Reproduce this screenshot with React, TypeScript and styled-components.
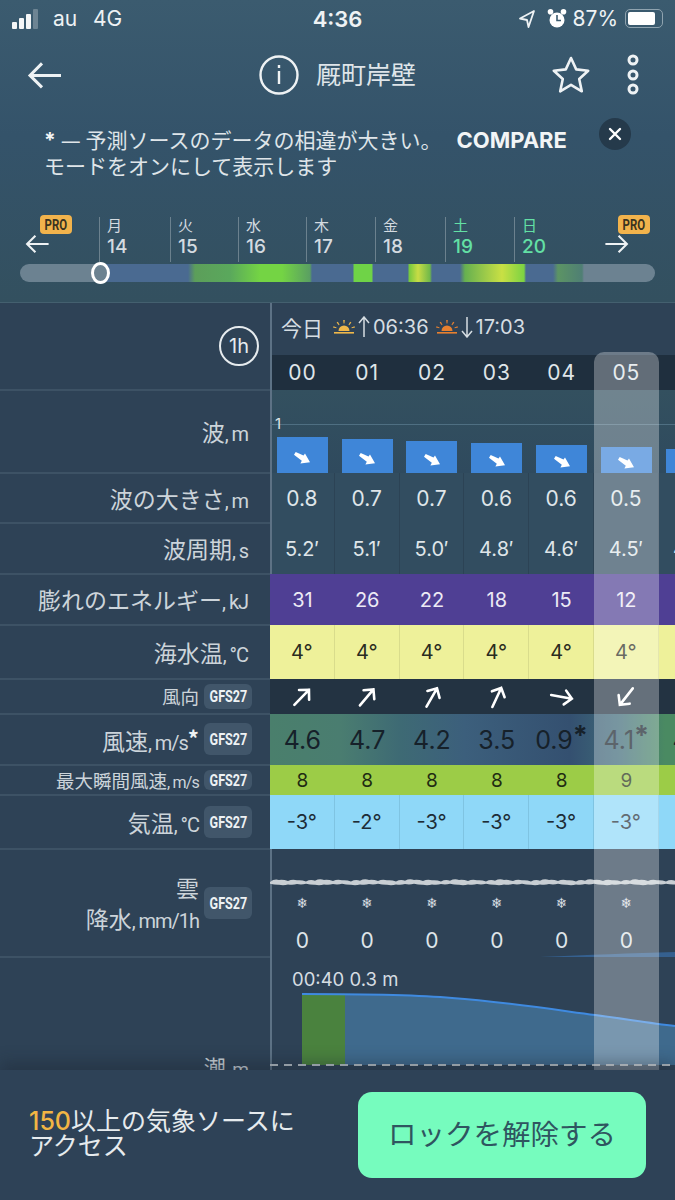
import React from "react";
import styled, { createGlobalStyle } from "styled-components";

const GlobalStyle = createGlobalStyle`
  html, body { margin: 0; padding: 0; background: #2e4256; }
  body { font-family: Inter, "Noto Sans CJK JP", sans-serif; }
`;

const CELL = 64.8;

const Page = styled.div`
  width: 675px;
  height: 1200px;
  overflow: hidden;
  display: flex;
  flex-direction: column;
  color: #e4e9ec;
`;

const Head = styled.header`
  height: 303px;
  flex: none;
  background: linear-gradient(180deg, #3b5b6f 0%, #34536a 45%, #33505f 100%);
  border-bottom: 1px solid #44606f;
  box-sizing: border-box;
`;

const StatusBar = styled.div`
  height: 37px;
  display: flex;
  align-items: center;
  padding: 0 12px;
  font-size: 21px;
  color: #eef2f4;
`;

const Signal = styled.div`
  display: flex;
  align-items: flex-end;
  gap: 2px;
  height: 20px;
  margin-right: 15px;
`;

const SignalBar = styled.i<{ $h: number; $off?: boolean }>`
  display: block;
  width: 5px;
  height: ${(p) => p.$h}px;
  border-radius: 1px;
  background: ${(p) => (p.$off ? "#6d8493" : "#f4f6f7")};
`;

const Carrier = styled.span`
  width: 40px;
`;

const Clock = styled.span`
  position: absolute;
  left: 0;
  width: 675px;
  text-align: center;
  font-weight: 600;
  font-size: 22px;
`;

const StatusRight = styled.div`
  margin-left: auto;
  display: flex;
  align-items: center;
  gap: 6px;
`;

const LocationIcon = styled.svg`
  margin-right: 5px;
`;

const Battery = styled.div`
  width: 38px;
  height: 19px;
  border: 1.5px solid #8fa3af;
  border-radius: 5px;
  padding: 2px;
  box-sizing: border-box;
  margin-left: 1px;
  &::before {
    content: "";
    display: block;
    width: 85%;
    height: 100%;
    background: #fff;
    border-radius: 2px;
  }
`;

const Nav = styled.nav`
  height: 76px;
  display: flex;
  align-items: center;
  padding-left: 27px;
`;

const Title = styled.div`
  display: flex;
  align-items: center;
  gap: 17px;
  margin-left: 196px;
  width: 292px;
  font-size: 25px;
  color: #dfe5e9;
`;

const TitleText = styled.span`
  margin-bottom: 4px;
`;

const NavActions = styled.div`
  display: flex;
  align-items: center;
  gap: 35px;
`;

const Notice = styled.div`
  display: flex;
  align-items: flex-start;
  height: 54px;
  margin-top: 15px;
  padding-left: 44px;
`;

const NoticeText = styled.p`
  margin: 0;
  width: 555px;
  flex: none;
  font-size: 21px;
  line-height: 25px;
  white-space: nowrap;
  color: #dfe5e9;
`;

const Strong = styled.b`
  font-weight: 700;
  color: #f2f5f6;
`;

const NoticeDash = styled.span`
  font-size: 18px;
`;

const CompareWord = styled(Strong)`
  margin-left: 15px;
  font-size: 22px;
`;

const CloseButton = styled.div`
  width: 32px;
  height: 32px;
  margin-top: -10px;
  border-radius: 50%;
  background: #253a4b;
  display: flex;
  align-items: center;
  justify-content: center;
`;

const DayRow = styled.div`
  display: flex;
  height: 45px;
  margin-top: 35px;
`;

const ArrowBox = styled.div<{ $w: number; $pad: number }>`
  position: relative;
  width: ${(p) => p.$w}px;
  flex: none;
  box-sizing: border-box;
  padding: 17px 0 0 ${(p) => p.$pad}px;
`;

const ProBadge = styled.span<{ $left: number }>`
  position: absolute;
  top: -2px;
  left: ${(p) => p.$left}px;
  width: 32px;
  height: 19px;
  border-radius: 4px;
  background: #f2b34c;
  display: flex;
  align-items: center;
  justify-content: center;
`;

const ProText = styled.span`
  display: block;
  color: #3a3320;
  font-family: "Roboto", sans-serif;
  font-size: 15px;
  font-weight: 700;
  transform: scaleX(0.76);
`;

const Day = styled.div<{ $w: number; $weekend?: boolean }>`
  width: ${(p) => p.$w}px;
  flex: none;
  box-sizing: border-box;
  border-left: 1px solid rgba(255, 255, 255, 0.28);
  padding-left: 7px;
  color: ${(p) => (p.$weekend ? "#63e0a5" : "#d4dbe0")};
`;

const DayName = styled.div`
  font-size: 15px;
  line-height: 18px;
`;

const DayNum = styled.div`
  font-size: 19px;
  line-height: 24px;
  font-weight: 500;
`;

const Slider = styled.div`
  position: relative;
  height: 18px;
  margin: 2px 20px 0;
  border-radius: 9px;
  background: linear-gradient(
    90deg,
    #6c8291 0 80px,
    #4a6a91 80px 168px,
    #5c9e5a 175px,
    #5aa85c 210px,
    #74d444 240px,
    #74d444 262px,
    #5a9f62 290px,
    #4a6a91 292px 333px,
    #6fd347 334px 352px,
    #4a6a91 353px 388px,
    #74c83f 389px,
    #c8dc45 398px,
    #6fb84a 410px,
    #4a6a91 412px 440px,
    #66b050 445px,
    #c9e044 482px,
    #7cd342 504px,
    #4a6a91 506px 533px,
    #5c9464 538px,
    #4f7f74 562px,
    #6c8291 564px
  );
`;

const Thumb = styled.div`
  position: absolute;
  left: 71px;
  top: -2px;
  width: 19px;
  height: 22px;
  box-sizing: border-box;
  border: 3px solid #fff;
  border-radius: 50%;
  background: #6c8291;
`;

const Table = styled.section`
  position: relative;
  height: 767px;
  flex: none;
  overflow: hidden;
  background: #2e4256;
`;

const Highlight = styled.div`
  position: absolute;
  left: 594px;
  top: 49px;
  bottom: 0;
  width: 65px;
  border-radius: 10px 10px 0 0;
  background: rgba(255, 255, 255, 0.3);
  pointer-events: none;
`;

const Row = styled.div<{ $h: number }>`
  display: flex;
  height: ${(p) => p.$h}px;
`;

const Label = styled.div<{ $badge?: boolean; $size?: number }>`
  width: 270px;
  flex: none;
  box-sizing: border-box;
  display: flex;
  align-items: center;
  justify-content: flex-end;
  gap: 5px;
  padding-right: ${(p) => (p.$badge ? 18 : 22)}px;
  border-bottom: 1px solid #3d5265;
  box-shadow: 0 1px 0 #3d5265;
  font-family: "Noto Sans CJK JP", Roboto, sans-serif;
  font-size: ${(p) => p.$size ?? 23}px;
  color: #ccd4da;
  white-space: nowrap;
`;

const Unit = styled.span`
  font-family: Roboto, sans-serif;
  font-size: 0.87em;
  letter-spacing: -0.052em;
`;

const TideLabel = styled(Label)`
  align-items: flex-start;
  padding-top: 97px;
  line-height: 24px;
  border-bottom: 0;
  box-shadow: none;
`;

const StackLabel = styled.div`
  text-align: right;
  line-height: 31px;
  margin-top: 4px;
`;

const LabelStar = styled.b`
  font-size: 22px;
  color: #eef2f4;
  vertical-align: 3px;
`;

const Badge = styled.span<{ $h: number }>`
  width: 48px;
  height: ${(p) => p.$h}px;
  flex: none;
  border-radius: 6px;
  background: #41566a;
  display: flex;
  align-items: center;
  justify-content: center;
`;

const BadgeText = styled.span`
  display: block;
  color: #eef2f4;
  font-family: "Roboto", sans-serif;
  font-size: 17px;
  font-weight: 700;
  transform: scaleX(0.74);
`;

const Strip = styled.div<{ $bg?: string; $rule?: boolean }>`
  position: relative;
  width: 405px;
  flex: none;
  display: flex;
  background: ${(p) => p.$bg ?? "transparent"};
  box-shadow: ${(p) => (p.$rule ? "inset 2px 0 0 #5d7285" : "none")};
`;

const ColumnStrip = styled(Strip)`
  flex-direction: column;
`;

const CellRow = styled.div`
  display: flex;
  flex: none;
`;

const HourRow = styled(CellRow)`
  background: #1f2f3e;
  box-shadow: inset 2px 0 0 #5d7285;
`;

const Cell = styled.div<{ $size?: number; $color?: string; $line?: string }>`
  width: ${CELL}px;
  flex: none;
  box-sizing: border-box;
  display: flex;
  align-items: center;
  justify-content: center;
  font-size: ${(p) => p.$size ?? 20}px;
  color: ${(p) => p.$color ?? "#dfe5e9"};
  border-right: ${(p) => (p.$line ? `1px solid ${p.$line}` : "0")};
  white-space: nowrap;
`;

const CellStar = styled.b`
  font-size: 27px;
  line-height: 20px;
  align-self: flex-start;
  margin-top: 12px;
`;

const WaveCell = styled(Cell)`
  align-items: flex-end;
`;

const WaveBar = styled.div<{ $h: number }>`
  width: 51px;
  height: ${(p) => p.$h}px;
  box-sizing: border-box;
  padding-top: 6px;
  background: #3f86d8;
  display: flex;
  align-items: center;
  justify-content: center;
`;

const ScaleLine = styled.div`
  position: absolute;
  left: 0;
  right: 0;
  top: 34px;
  height: 1px;
  background: #4f6f82;
`;

const ScaleMark = styled.span`
  position: absolute;
  left: 5px;
  top: 26px;
  font-size: 15px;
  line-height: 16px;
  color: #dfe5e9;
`;

const DateLine = styled.div`
  height: 52px;
  box-sizing: border-box;
  padding: 0 0 4px 11px;
  display: flex;
  align-items: center;
  gap: 3px;
  font-size: 20px;
  color: #d6dde2;
`;

const DateWord = styled.span`
  margin-right: 7px;
  font-size: 21px;
`;

const Times = styled.span`
  margin-right: 4px;
`;

const HourCell = styled(Cell)`
  height: 35px;
  font-size: 21px;
  letter-spacing: 1px;
`;

const OneHour = styled.div`
  width: 40px;
  height: 40px;
  box-sizing: border-box;
  margin-right: -11px;
  border: 2px solid #e6ebee;
  border-radius: 50%;
  display: flex;
  align-items: center;
  justify-content: center;
  font-family: Inter, sans-serif;
  font-size: 20px;
  color: #e6ebee;
`;

const CloudBand = styled.svg`
  display: block;
  flex: none;
  margin-top: 28px;
  width: 405px;
  height: 12px;
`;

const Flake = styled(Cell)`
  height: 28px;
  font-family: "DejaVu Sans", sans-serif;
  font-size: 14px;
  color: #d7dde1;
`;

const ZeroCell = styled(Cell)`
  height: 34px;
  margin-top: 6px;
  font-size: 21px;
`;

const TideChart = styled.svg`
  display: block;
  flex: none;
  margin-top: -6px;
  width: 405px;
  height: 119px;
  font-family: Inter, sans-serif;
`;

const Footer = styled.footer`
  position: relative;
  height: 130px;
  flex: none;
  box-sizing: border-box;
  display: flex;
  align-items: center;
  padding: 0 29px;
  background: #2e4257;
  box-shadow: 0 -8px 14px rgba(25, 35, 45, 0.35);
`;

const Pitch = styled.p`
  margin: 0 0 2px;
  width: 329px;
  flex: none;
  font-size: 25px;
  line-height: 25px;
  color: #e6ebee;
`;

const Count = styled.span`
  color: #f2b544;
  font-weight: 500;
`;

const UnlockButton = styled.button`
  width: 288px;
  height: 86px;
  flex: none;
  border: 0;
  border-radius: 14px;
  padding: 0 0 6px;
  background: #76fcbe;
  color: #2f5560;
  font-family: inherit;
  font-size: 28.5px;
`;

const BackArrow: React.FC<{ size?: number; flip?: boolean }> = ({ size = 36, flip }) => (
  <svg
    width={size}
    height={size * 0.8}
    viewBox="0 0 36 28"
    fill="none"
    stroke="#eef2f4"
    strokeWidth="3"
    style={flip ? { transform: "scaleX(-1)" } : undefined}
  >
    <path d="M34 14H3M15 2 3 14l12 12" />
  </svg>
);

const SunIcon: React.FC<{ color: string }> = ({ color }) => (
  <svg width="22" height="14" viewBox="0 0 22 14" fill={color}>
    <path d="M5.500 11a5.500 5.500 0 0 1 11 0z" />
    <rect x="1" y="12" width="20" height="1.600" />
    <path d="M10.200 0h1.600l-.4 3.400h-.8zM3.600 2.600l1.300-.9 1.600 3-.7.5zM18.400 2.600l-1.300-.9-1.600 3 .7.5zM0 7.600l.5-1.400 3.100 1.200-.3.8zM22 7.600l-.5-1.400-3.100 1.200.3.8z" />
  </svg>
);

const VerticalArrow: React.FC<{ down?: boolean }> = ({ down }) => (
  <svg
    width="12"
    height="22"
    viewBox="0 0 12 22"
    fill="none"
    stroke="#d6dde2"
    strokeWidth="1.500"
    style={down ? { transform: "rotate(180deg)" } : undefined}
  >
    <path d="M6 21V1M1 7l5-6 5 6" />
  </svg>
);

const WaveArrow = () => (
  <svg width="16" height="12" viewBox="0 0 16 12" fill="#fff">
    <path d="M0 2.800 1.700 0l7.800 3.600L11 1.400 16 10.200l-9.600 1.400 1.400-2.800z" />
  </svg>
);

const WindArrow: React.FC<{ deg: number }> = ({ deg }) => (
  <svg
    width="26"
    height="26"
    viewBox="0 0 26 26"
    fill="none"
    stroke="#fff"
    strokeWidth="2.600"
    strokeLinecap="round"
    style={{ transform: `rotate(${deg}deg)` }}
  >
    <path d="M13 24V3M6 10l7-7 7 7" />
  </svg>
);

// scalloped band for the cloud line, one lump every few px
const cloudPath = () => {
  let top = "M0 5";
  let bottom = "";
  for (let x = 0; x < 405; x += 9) {
    const up = 3 + ((x * 7) % 5) * 0.35;
    const low = 6.8 + ((x * 3) % 4) * 0.3;
    top += ` Q${x + 4.5} ${up - 1.6} ${x + 9} ${up}`;
    bottom = ` Q${x + 4.5} ${low + 1} ${x} ${low}` + bottom;
  }
  return `${top} L405 7.500${bottom} Z`;
};

const hours = ["00", "01", "02", "03", "04", "05"];
const heights = ["0.8", "0.7", "0.7", "0.6", "0.6", "0.5"];
const periods = ["5.2′", "5.1′", "5.0′", "4.8′", "4.6′", "4.5′", "4.4′"];
const energy = [31, 26, 22, 18, 15, 12];
const waveBars = [36, 34, 32, 30, 28, 26, 24];
const windDirs = [44, 40, 30, 25, 100, 218];
const windSpeed = ["4.6", "4.7", "4.2", "3.5", "0.9", "4.1", "4.6"];
const gusts = [8, 8, 8, 8, 8, 9];
const airTemps = ["-3°", "-2°", "-3°", "-3°", "-3°", "-3°"];

const days = [
  { name: "月", num: 14, w: 71 },
  { name: "火", num: 15, w: 68 },
  { name: "水", num: 16, w: 68 },
  { name: "木", num: 17, w: 69 },
  { name: "金", num: 18, w: 70 },
  { name: "土", num: 19, w: 69, weekend: true },
  { name: "日", num: 20, w: 90, weekend: true },
];

const Gfs: React.FC<{ h: number }> = ({ h }) => (
  <Badge $h={h}>
    <BadgeText>GFS27</BadgeText>
  </Badge>
);

const App: React.FC = () => {
  return (
    <Page>
      <GlobalStyle />
      <Head>
        <StatusBar>
          <Signal>
            <SignalBar $h={7} />
            <SignalBar $h={11} />
            <SignalBar $h={15} />
            <SignalBar $h={20} $off />
          </Signal>
          <Carrier>au</Carrier>
          <span>4G</span>
          <Clock>4:36</Clock>
          <StatusRight>
            <LocationIcon width="18" height="20" viewBox="0 0 18 20" fill="none" stroke="#eef2f4" strokeWidth="1.800">
              <path d="M16 2 2 9.500l7 1.500 1.500 7z" strokeLinejoin="round" />
            </LocationIcon>
            <svg width="20" height="22" viewBox="0 0 20 22" fill="#fff">
              <circle cx="10" cy="12" r="7.500" />
              <circle cx="3.500" cy="3.800" r="2.800" />
              <circle cx="16.500" cy="3.800" r="2.800" />
              <path d="M10 7v5.500h4" fill="none" stroke="#3b5b6f" strokeWidth="1.600" />
            </svg>
            <span>87%</span>
            <Battery />
          </StatusRight>
        </StatusBar>

        <Nav>
          <BackArrow />
          <Title>
            <svg width="40" height="40" viewBox="0 0 40 40" fill="none" stroke="#eef2f4" strokeWidth="2.400">
              <circle cx="20" cy="20" r="18.500" />
              <path d="M20 16v13" />
              <path d="M20 10v3" />
            </svg>
            <TitleText>厩町岸壁</TitleText>
          </Title>
          <NavActions>
            <svg width="40" height="40" viewBox="0 0 40 40" fill="none" stroke="#eef2f4" strokeWidth="2.600" strokeLinejoin="round">
              <path d="m20 3 5.200 11.400 12 1.300-9 8.300 2.600 12.300L20 29.800 9.200 36.300 11.800 24l-9-8.300 12-1.300z" />
            </svg>
            <svg width="14" height="42" viewBox="0 0 14 42" fill="none" stroke="#eef2f4" strokeWidth="3">
              <circle cx="7" cy="6" r="4" />
              <circle cx="7" cy="21" r="4" />
              <circle cx="7" cy="35" r="4" />
            </svg>
          </NavActions>
        </Nav>

        <Notice>
          <NoticeText>
            <Strong>*</Strong> <NoticeDash>—</NoticeDash> 予測ソースのデータの相違が大きい。
            <CompareWord>COMPARE</CompareWord>
            <br />
            モードをオンにして表示します
          </NoticeText>
          <CloseButton>
            <svg width="14" height="14" viewBox="0 0 14 14" stroke="#fff" strokeWidth="2.400" strokeLinecap="round">
              <path d="m2 2 10 10M12 2 2 12" />
            </svg>
          </CloseButton>
        </Notice>

        <DayRow>
          <ArrowBox $w={99} $pad={25}>
            <BackArrow size={25} />
            <ProBadge $left={40}>
              <ProText>PRO</ProText>
            </ProBadge>
          </ArrowBox>
          {days.map((d) => (
            <Day key={d.num} $w={d.w} $weekend={d.weekend}>
              <DayName>{d.name}</DayName>
              <DayNum>{d.num}</DayNum>
            </Day>
          ))}
          <ArrowBox $w={71} $pad={0}>
            <BackArrow size={25} flip />
            <ProBadge $left={14}>
              <ProText>PRO</ProText>
            </ProBadge>
          </ArrowBox>
        </DayRow>

        <Slider>
          <Thumb />
        </Slider>
      </Head>

      <Table>
        <Row $h={87}>
          <Label>
            <OneHour>1h</OneHour>
          </Label>
          <ColumnStrip $rule>
            <DateLine>
              <DateWord>今日</DateWord>
              <SunIcon color="#f0b84a" />
              <VerticalArrow />
              <Times>06:36</Times>
              <SunIcon color="#e8802f" />
              <VerticalArrow down />
              <span>17:03</span>
            </DateLine>
            <HourRow>
              {hours.map((h) => (
                <HourCell key={h}>{h}</HourCell>
              ))}
            </HourRow>
          </ColumnStrip>
        </Row>

        <Row $h={83}>
          <Label>
            <span>
              波<Unit>, m</Unit>
            </span>
          </Label>
          <Strip $rule $bg="linear-gradient(180deg, #33505f, #2f4a5e)">
            <ScaleLine />
            <ScaleMark>1</ScaleMark>
            {waveBars.map((h, i) => (
              <WaveCell key={i}>
                <WaveBar $h={h}>
                  <WaveArrow />
                </WaveBar>
              </WaveCell>
            ))}
          </Strip>
        </Row>

        <Row $h={50}>
          <Label>
            <span>
              波の大きさ<Unit>, m</Unit>
            </span>
          </Label>
          <Strip $rule $bg="#324d60">
            {heights.map((v, i) => (
              <Cell key={i} $size={21} $line="#2c4355">
                {v}
              </Cell>
            ))}
          </Strip>
        </Row>

        <Row $h={51}>
          <Label>
            <span>
              波周期<Unit>, s</Unit>
            </span>
          </Label>
          <Strip $rule $bg="#324d60">
            {periods.map((v, i) => (
              <Cell key={i} $line="#2c4355">
                {v}
              </Cell>
            ))}
          </Strip>
        </Row>

        <Row $h={51}>
          <Label>
            <span>
              膨れのエネルギー<Unit>, kJ</Unit>
            </span>
          </Label>
          <Strip $bg="#4f3f94">
            {energy.map((v, i) => (
              <Cell key={i} $color="#eceaf5">
                {v}
              </Cell>
            ))}
          </Strip>
        </Row>

        <Row $h={54}>
          <Label>
            <span>
              海水温<Unit>, °C</Unit>
            </span>
          </Label>
          <Strip $bg="#eef19a">
            {hours.map((h) => (
              <Cell key={h} $color="#2a2c20" $line="#d9dc8c">
                4°
              </Cell>
            ))}
          </Strip>
        </Row>

        <Row $h={35}>
          <Label $badge $size={18.5}>
            風向
            <Gfs h={25} />
          </Label>
          <Strip $bg="#233342">
            {windDirs.map((deg, i) => (
              <Cell key={i}>
                <WindArrow deg={deg} />
              </Cell>
            ))}
          </Strip>
        </Row>

        <Row $h={51}>
          <Label $badge>
            <span>
              風速<Unit>, m/s</Unit>
              <LabelStar>*</LabelStar>
            </span>
            <Gfs h={32} />
          </Label>
          <Strip $bg="linear-gradient(90deg, #4a7f6c 0, #4a7d70 70px, #3e6a74 130px, #3c5f7c 195px, #345070 300px, #3e6a78 350px, #4a8a62 395px)">
            {windSpeed.map((v, i) => (
              <Cell key={i} $size={25} $color="#16212a">
                {v}
                {(i === 4 || i === 5) && <CellStar>*</CellStar>}
              </Cell>
            ))}
          </Strip>
        </Row>

        <Row $h={30}>
          <Label $badge $size={18.5}>
            <span>
              最大瞬間風速<Unit>, m/s</Unit>
            </span>
            <Gfs h={20} />
          </Label>
          <Strip $bg="#9ccc47">
            {gusts.map((v, i) => (
              <Cell key={i} $size={19} $color="#1f2b12">
                {v}
              </Cell>
            ))}
          </Strip>
        </Row>

        <Row $h={54}>
          <Label $badge>
            <span>
              気温<Unit>, °C</Unit>
            </span>
            <Gfs h={32} />
          </Label>
          <Strip $bg="#8fd8f8">
            {airTemps.map((v, i) => (
              <Cell key={i} $color="#1d2c36" $line="#7fc4e2">
                {v}
              </Cell>
            ))}
          </Strip>
        </Row>

        <Row $h={108}>
          <Label $badge>
            <StackLabel>
              雲
              <br />
              降水<Unit>, mm/1h</Unit>
            </StackLabel>
            <Gfs h={32} />
          </Label>
          <ColumnStrip $rule>
            <CloudBand viewBox="0 0 405 12">
              <path d={cloudPath()} fill="#c8ced3" />
            </CloudBand>
            <CellRow>
              {hours.map((h) => (
                <Flake key={h}>❄</Flake>
              ))}
            </CellRow>
            <CellRow>
              {hours.map((h) => (
                <ZeroCell key={h}>0</ZeroCell>
              ))}
            </CellRow>
          </ColumnStrip>
        </Row>

        <Row $h={113}>
          <TideLabel $size={22}>
            <span>
              潮<Unit>, m</Unit>
            </span>
          </TideLabel>
          <ColumnStrip $rule>
            <TideChart viewBox="0 0 405 119">
              <path d="M270 6C320 4 360 2 405 1V6C360 6 320 6 270 6Z" fill="#35608f" />
              <text x="22" y="35" fontSize="18.500" fill="#d6dde2">
                00:40 0.3 m
              </text>
              <path d="M75 43C120 43 150 44 182 47C235 51 280 58 325 64C355 68 380 72 405 75V114H75Z" fill="#3f6a8d" />
              <rect x="32" y="43" width="43" height="71" fill="#4a823e" />
              <path d="M32 43C100 43 150 44 182 47C235 51 280 58 325 64C355 68 380 72 405 75" fill="none" stroke="#3f8ae0" strokeWidth="2" />
              <path d="M0 114H405" stroke="#b7c0c7" strokeWidth="2" strokeDasharray="8 6" />
            </TideChart>
          </ColumnStrip>
        </Row>

        <Highlight />
      </Table>

      <Footer>
        <Pitch>
          <Count>150</Count>以上の気象ソースに
          <br />
          アクセス
        </Pitch>
        <UnlockButton>ロックを解除する</UnlockButton>
      </Footer>
    </Page>
  );
};

export default App;
